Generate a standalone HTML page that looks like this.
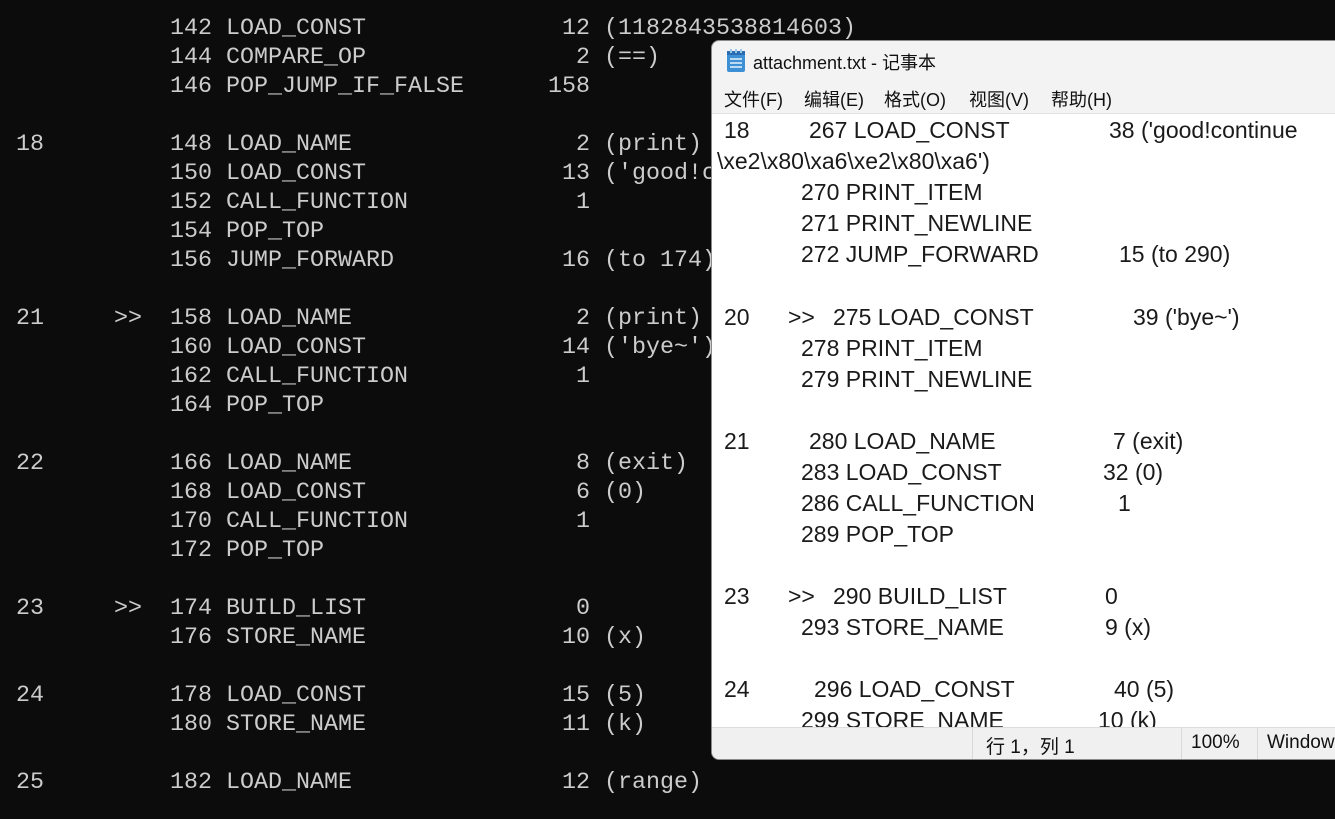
<!DOCTYPE html>
<html><head><meta charset="utf-8"><style>
html,body{margin:0;padding:0;background:#0c0c0c;width:1335px;height:819px;overflow:hidden;position:relative}
pre{position:absolute;left:16px;top:15px;margin:0;font-family:"Liberation Mono",monospace;font-size:23.33px;line-height:29px;color:#cccccc}
#np{position:absolute;left:711px;top:40px;width:640px;height:718px;background:#f3f3f3;border:1px solid #8a8a8a;border-radius:8px;overflow:hidden;font-family:"Liberation Sans","Noto Sans CJK SC",sans-serif}
.t{position:absolute;white-space:pre;color:#111}
#edit{position:absolute;left:0;top:72px;width:640px;height:613px;background:#fff;border-top:1px solid #e3e3e3;overflow:hidden}
#edit .t{font-size:23px;line-height:31px;color:#1a1a1a}
#sb{position:absolute;left:0;top:686px;width:640px;height:32px;background:#f0f0f0;border-top:1px solid #dcdcdc}
.sep{position:absolute;top:0;width:1px;height:32px;background:#d9d9d9}
</style></head><body>
<pre>           142 LOAD_CONST              12 (1182843538814603)
           144 COMPARE_OP               2 (==)
           146 POP_JUMP_IF_FALSE      158

18         148 LOAD_NAME                2 (print)
           150 LOAD_CONST              13 ('good!continue')
           152 CALL_FUNCTION            1
           154 POP_TOP
           156 JUMP_FORWARD            16 (to 174)

21     &gt;&gt;  158 LOAD_NAME                2 (print)
           160 LOAD_CONST              14 ('bye~')
           162 CALL_FUNCTION            1
           164 POP_TOP

22         166 LOAD_NAME                8 (exit)
           168 LOAD_CONST               6 (0)
           170 CALL_FUNCTION            1
           172 POP_TOP

23     &gt;&gt;  174 BUILD_LIST               0
           176 STORE_NAME              10 (x)

24         178 LOAD_CONST              15 (5)
           180 STORE_NAME              11 (k)

25         182 LOAD_NAME               12 (range)</pre>
<div id="np">
 <svg style="position:absolute;left:14px;top:8px" width="20" height="24" viewBox="0 0 20 24"><rect x="1" y="2" width="18" height="21" rx="2" fill="#3d8fd6"/><rect x="1" y="2" width="18" height="4" fill="#2a6db0"/><g stroke="#e8f3fc" stroke-width="1.5"><line x1="4" y1="10" x2="16" y2="10"/><line x1="4" y1="14" x2="16" y2="14"/><line x1="4" y1="18" x2="16" y2="18"/></g><g fill="#9ac7ee"><rect x="4" y="0" width="2" height="4"/><rect x="9" y="0" width="2" height="4"/><rect x="14" y="0" width="2" height="4"/></g></svg>
 <div class="t" style="left:41px;top:8px;font-size:18px">attachment.txt - 记事本</div>
 <div class="t" style="left:12px;top:45px;font-size:18px">文件(F)</div>
 <div class="t" style="left:92px;top:45px;font-size:18px">编辑(E)</div>
 <div class="t" style="left:172px;top:45px;font-size:18px">格式(O)</div>
 <div class="t" style="left:257px;top:45px;font-size:18px">视图(V)</div>
 <div class="t" style="left:339px;top:45px;font-size:18px">帮助(H)</div>
 <div id="edit">
  <div class="t" style="left:12px;top:1px">18</div><div class="t" style="left:97px;top:1px">267 LOAD_CONST</div><div class="t" style="left:397px;top:1px">38 ('good!continue</div>
  <div class="t" style="left:5px;top:32px">\xe2\x80\xa6\xe2\x80\xa6')</div>
  <div class="t" style="left:89px;top:63px">270 PRINT_ITEM</div>
  <div class="t" style="left:89px;top:94px">271 PRINT_NEWLINE</div>
  <div class="t" style="left:89px;top:125px">272 JUMP_FORWARD</div><div class="t" style="left:407px;top:125px">15 (to 290)</div>
  <div class="t" style="left:12px;top:188px">20</div><div class="t" style="left:76px;top:188px">&gt;&gt;</div><div class="t" style="left:121px;top:188px">275 LOAD_CONST</div><div class="t" style="left:421px;top:188px">39 ('bye~')</div>
  <div class="t" style="left:89px;top:219px">278 PRINT_ITEM</div>
  <div class="t" style="left:89px;top:250px">279 PRINT_NEWLINE</div>
  <div class="t" style="left:12px;top:312px">21</div><div class="t" style="left:97px;top:312px">280 LOAD_NAME</div><div class="t" style="left:401px;top:312px">7 (exit)</div>
  <div class="t" style="left:89px;top:343px">283 LOAD_CONST</div><div class="t" style="left:391px;top:343px">32 (0)</div>
  <div class="t" style="left:89px;top:374px">286 CALL_FUNCTION</div><div class="t" style="left:406px;top:374px">1</div>
  <div class="t" style="left:89px;top:405px">289 POP_TOP</div>
  <div class="t" style="left:12px;top:467px">23</div><div class="t" style="left:76px;top:467px">&gt;&gt;</div><div class="t" style="left:121px;top:467px">290 BUILD_LIST</div><div class="t" style="left:393px;top:467px">0</div>
  <div class="t" style="left:89px;top:498px">293 STORE_NAME</div><div class="t" style="left:393px;top:498px">9 (x)</div>
  <div class="t" style="left:12px;top:560px">24</div><div class="t" style="left:102px;top:560px">296 LOAD_CONST</div><div class="t" style="left:402px;top:560px">40 (5)</div>
  <div class="t" style="left:89px;top:591px">299 STORE_NAME</div><div class="t" style="left:386px;top:591px">10 (k)</div>
 </div>
 <div id="sb">
  <div class="sep" style="left:260px"></div><div class="sep" style="left:469px"></div><div class="sep" style="left:545px"></div>
  <div class="t" style="left:274px;top:4px;font-size:19px">行 1，列 1</div>
  <div class="t" style="left:479px;top:4px;font-size:19px">100%</div>
  <div class="t" style="left:555px;top:4px;font-size:19px">Windows (CRLF)</div>
 </div>
</div>
</body></html>
